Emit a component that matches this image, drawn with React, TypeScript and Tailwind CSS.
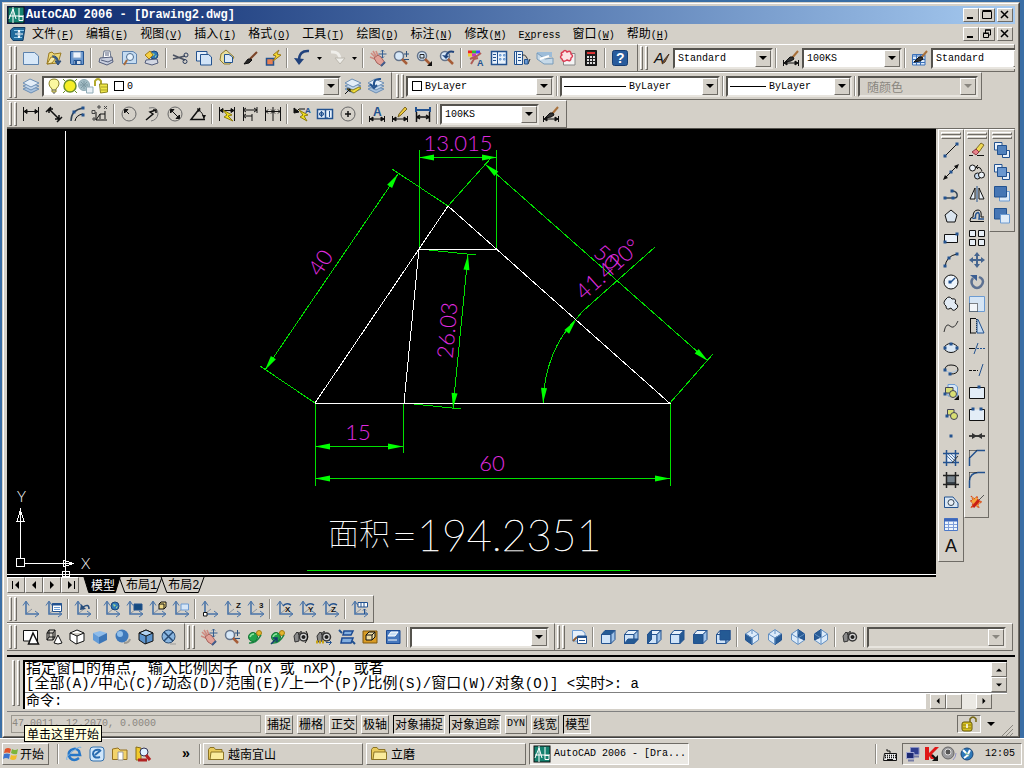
import type { ReactNode } from 'react'

const B = '#23528f'
const L = '#c3dbf5'
const M = '#6c9bd2'

type PathProps = { d: string; s?: string; f?: string; w?: number; dash?: string }

const P = ({ d, s = '#111', f = 'none', w = 1, dash }: PathProps) => (
  <path d={d} stroke={s} fill={f} strokeWidth={w} strokeDasharray={dash} />
)

const Axes = () => (
  <>
    <P d="M3 1V13H15" s="#4873a8" w={1.6} />
    <P d="M0 4.500L3 0L6 4.500M12 10L16 13L12 16" s="#4873a8" />
    <P d="M4 12L9 8" s="#8b939e" />
  </>
)

const Span = ({ y = 13 }: { y?: number }) => (
  <>
    <P d={`M.5 ${y - 3}V${y + 3}M15.500 ${y - 3}V${y + 3}M1 ${y}H15`} />
    <P d={`M1 ${y}L4 ${y - 2}V${y + 2}ZM15 ${y}L12 ${y - 2}V${y + 2}Z`} f="#111" />
  </>
)

const Brush = () => (
  <>
    <P d="M15 1L9 8" s="#a8703a" w={2} />
    <P d="M10 7L7 7L2 12L8 11L11 9Z" f="#333" />
  </>
)

const Lens = () => (
  <>
    <circle cx="6" cy="6" r="4.500" fill="#d7e8f8" stroke="#64748b" strokeWidth="1.500" />
    <P d="M9 9L14 14" s="#a65d38" w={2.5} />
  </>
)

const Globe = ({ x = 10, y = 5, r = 4 }) => (
  <>
    <circle cx={x} cy={y} r={r} fill="#2e78b8" stroke="#1d4778" />
    <P d={`M${x - 2} ${y - 2}L${x + 1} ${y - 1}L${x - 1} ${y + 1}ZM${x + 1} ${y + 1}L${x + 3} ${y}L${x + 1} ${y + 3}Z`} s="none" f="#a8d98a" />
  </>
)

const Hand = () => (
  <>
    <P d="M5 7L1 3M6 6L3 1M8 6L6 1M5 9L0 7" s="#cf8a80" w={1.6} />
    <P d="M4 8L8 5L11 7L15 13L12 16L7 13Z" s="#a5605a" f="#e2a197" />
    <P d="M15 12L11 16" s="#3f5f8f" w={2} />
    <P d="M12.500 0V8M8.500 4H16.500M11 1.500L12.500 0L14 1.500M11 6.500L12.500 8L14 6.500" s="#355f91" />
  </>
)

const Orbit = () => (
  <>
    <circle cx="6" cy="8" r="4.500" fill="#21a34a" stroke="#157334" />
    <P d="M3 8Q4 5 7 5" s="#8ee5a0" w={1.5} />
    <circle cx="12" cy="4" r="2.500" fill="#e4b52c" stroke="#a37d15" />
    <P d="M2 14Q9 15 14 6" s="#168440" w={1.5} />
  </>
)

const Camera = () => (
  <>
    <P d="M1 7L4 3L6 5V12L2 13Z" f="#8a8a8a" s="#333" />
    <circle cx="10.500" cy="8" r="4" fill="#d2d2d2" stroke="#333" strokeWidth="1.500" />
    <circle cx="10.500" cy="8" r="1.500" fill="#222" />
    <P d="M6 3V6M8 2V5" w={1.5} s="#333" />
  </>
)

const Cube = ({ dark }: { dark: string }) => {
  const tone = (k: string, base: string) => (dark === k ? '#245a94' : base)
  return (
    <>
      <P d="M1.500 5.500H11V14.500H1.500Z" s={B} f={tone('front', '#cfe3f8')} />
      <P d="M1.500 5.500L5 1.500H15L11 5.500Z" s={B} f={tone('top', '#e5f0fb')} />
      <P d="M11 5.500L15 1.500V10.500L11 14.500Z" s={B} f={tone('right', '#9fc2e8')} />
      {dark === 'bottom' && <P d="M1.500 14.500L5 10H15L11 14.500Z" s={B} f="#245a94" />}
      {dark === 'left' && <P d="M1.500 5.500L5.500 1.500V10.500L1.500 14.500Z" s={B} f="#245a94" />}
      {dark === 'back' && <P d="M5 1.500H15V11H5Z" s={B} f="#245a94" />}
    </>
  )
}

const Iso = ({ dark }: { dark: string }) => (
  <>
    <P d="M8 .5L14.500 5V11L8 15.500L1.500 11V5Z" s="#6390c2" f="#dcebfa" />
    <P d={dark} s={B} f="#285c96" />
    <P d="M1.500 5L8 9L14.500 5M8 9V15M8 1V5" s="#6390c2" />
  </>
)

const Hatch = ({ f }: { f: string }) => (
  <>
    <P d="M3.500 3.500H12.500V12.500H3.500Z" f={f} s={B} />
    <P d="M0 3.500H16M0 12.500H16M3.500 0V16M12.500 0V16" s={B} w={1.5} />
    <P d="M4 6L10 12M5 4L12 11M8 4L12 8" s="#5a7da7" />
    <P d="M9 13L15 6" s="#333" />
  </>
)

const Letter = ({ c, x = 8, y = 7, size = 9, fill = '#111' }: { c: string; x?: number; y?: number; size?: number; fill?: string }) => (
  <text x={x} y={y} fontSize={size} fontWeight="700" fill={fill} stroke="none" fontFamily="Liberation Sans, sans-serif">{c}</text>
)

const Stack = ({ a, b }: { a: string; b: string }) => (
  <>
    <P d="M.5 .5H8V8H.5Z" s={B} f={a} />
    <P d="M8.500 8.500H15.500V15.500H8.500Z" s={B} f={a} />
    <P d="M3.500 3.500H12.500V12.500H3.500Z" s={B} f={b} />
  </>
)

const Dot = ({ x, y }: { x: number; y: number }) => <rect x={x - 1.5} y={y - 1.5} width="3" height="3" fill={B} stroke="none" />

const Arrowed = ({ children }: { children: ReactNode }) => (
  <>
    {children}
    <P d="M16 11V16H11Z" f="#111" s="none" />
  </>
)

const Layers = () => (
  <>
    <P d="M0 11L7 8L16 11L8 15Z" s="#6d8fb4" f="#a8c2de" />
    <P d="M0 8L7 5L16 8L8 12Z" s="#6d8fb4" f="#c5d8ec" />
    <P d="M0 5L7 1L16 5L8 9Z" s="#6d8fb4" f="#e4eef8" />
  </>
)

const icons: Record<string, ReactNode> = {
  app: (
    <>
      <rect width="16" height="16" fill="#14816f" />
      <P d="M1 12L5 2L8 12M1 9H16M5 0V16M11 1V10M11 9.500H15V13.500H11Z" s="#fff" />
    </>
  ),
  doc: (
    <>
      <P d="M3.500 1.500H15L13 14.500H3L.5 11V4Z" f="#216b9c" s="#123d66" />
      <P d="M4 4.500H14M4 11.500H12" s="#8cc6e8" />
      <P d="M9 4V12M5 8H13M8 6.500L9 4L10 6.500M8 9.500L9 12L10 9.500" s="#fff" />
    </>
  ),
  new: <P d="M.5 2.500H11.500L15.500 6V14.500H.5Z" f="#d8e8f8" s="#5c82ad" />,
  open: (
    <>
      <P d="M1 14L3 3L6 2L8 4L15 3L12 13Z" f="#ecd777" s="#9a7b23" />
      <P d="M1 14L5 7L10 8L6 13Z" f="#f7eba8" s="#9a7b23" />
      <P d="M6 6Q12 5 12 12M9 11L12 15L15 11Z" s="#2d4d77" f="#345b8c" />
    </>
  ),
  save: (
    <>
      <P d="M1.500 1.500H14.500V14.500H2.500L1.500 13.500Z" f="#6b98cf" s={B} />
      <P d="M4 2H12V8H4Z" f="#eef4fb" s="#8aa9ce" />
      <P d="M5 10.500H12V14.500H5Z" f="#d5dfeb" s={B} />
      <P d="M7 11V14" s={B} w={2} />
    </>
  ),
  print: (
    <>
      <P d="M5 8L6 1H12L13 8" f="#fff" s="#68748b" />
      <P d="M2 8L14 7L15 12L9 15L1 12Z" f="#c9cfde" s="#535d7b" />
      <P d="M3 10L10 12L14 10M7 3H11M7 5H11" s="#535d7b" />
    </>
  ),
  preview: (
    <>
      <P d="M1.500 1.500H12L15.500 4V13.500H1.500Z" f="#c5dcf2" s="#6084ae" />
      <circle cx="9" cy="7" r="3.500" fill="#e8f3fc" stroke="#4d6c90" />
      <P d="M6 10L3 15" s="#a86b3a" w={2} />
    </>
  ),
  publish: (
    <>
      <Globe x={10} y={5} />
      <P d="M1 5L6 1L9 5L5 9Z" f="#f5cf43" s="#a47d17" />
      <P d="M2 10L13 9L14 13L8 15L1 13Z" f="#d2d7e3" s="#535d7b" />
    </>
  ),
  cut: (
    <>
      <P d="M0 5L12 10M0 9L12 6" s="#4a5160" w={1.5} />
      <circle cx="13" cy="5" r="2" stroke="#2b3c5c" />
      <circle cx="12" cy="11.500" r="2" stroke="#2b3c5c" />
    </>
  ),
  copy: (
    <>
      <P d="M.5 1.500H11V11H.5Z" f="#e6f0fb" s={B} />
      <P d="M4.500 4.500H12.500L15.500 7V15H4.500Z" f="#d2e4f7" s={B} />
    </>
  ),
  paste: (
    <>
      <P d="M2 4L7 0L15 7L11 14L5 14L1 10Z" f="#e9df9d" s="#8d7a2f" />
      <P d="M5.500 4.500H10L13.500 7V12.500H5.500Z" f="#dbe9f8" s={B} />
    </>
  ),
  brush: (
    <>
      <P d="M15 2L8 9" s="#7b4528" w={2} />
      <P d="M9 9L6 9L2 14L7 13L10 10Z" f="#282828" />
    </>
  ),
  block: (
    <>
      <P d="M1.500 8.500H8.500V15H1.500Z" f="#e88053" s={B} w={1.5} />
      <P d="M14 0L8 5L11 6L8 11L16 5L12 4Z" f="#f8dd30" s="#98781c" />
    </>
  ),
  undo: (
    <>
      <P d="M15 1Q5 0 5 11" s="#21427c" w={2.5} />
      <P d="M0 8L5 15L10 9Z" f="#21427c" s="none" />
    </>
  ),
  redo: (
    <>
      <P d="M2 2Q11 1 11 10" s="#efeeea" w={3} />
      <P d="M6 8L11 14L16 8Z" f="#efeeea" s="#bbb7ae" />
    </>
  ),
  pan: <Hand />,
  zoomrt: (<><Lens /><P d="M13.500 1V7M11 4H16M11 9.500H16" s="#2e527c" /></>),
  zoomwin: (<Arrowed><Lens /><P d="M4 4.500H8V8H4Z" s="#222" /></Arrowed>),
  zoomprev: (<><Lens /><P d="M15 2Q8 0 7 7" s="#1f447c" w={2} /><P d="M3 5L7 9L10 6Z" s="none" f="#1f447c" /></>),
  props: (
    <>
      <P d="M0 2H4" s="#e22" w={3} /><P d="M4 2H8" s="#3b3" w={3} /><P d="M8 2H12" s="#44f" w={3} />
      <P d="M0 5H4" s="#ec3" w={3} /><P d="M4 5H8" s="#c3c" w={3} />
      <P d="M2 9L9 6L13 3M3 14L6 9L10 8" s="#b05d56" w={2} />
      <Letter c="A" x={9} y={16} fill={B} />
    </>
  ),
  center: (
    <>
      <P d="M.5 1.500H15.500V14.500H.5Z" f="#eaf3fc" s={B} w={1.5} />
      <P d="M6.500 2V14M2 4.500H5M2 7.500H5M2 10.500H5" s={B} />
      <P d="M8.500 4.500H10V6H8.500ZM12.500 4.500H14V6H12.500ZM8.500 8.500H10V10H8.500ZM12.500 8.500H14V10H12.500Z" s={M} f={L} />
    </>
  ),
  palette: (
    <>
      <P d="M.5 1.500H8.500V14.500H.5Z" f="#eaf3fc" s={B} />
      <P d="M2.500 2V14M4 4.500H7M4 7.500H7M4 10.500H7" s={B} />
      <P d="M8 5Q13 4 14 12M11 10L14 14L16 9" s="#333" />
      <P d="M10.500 9.500H14V14H10.500Z" f={M} s={B} />
    </>
  ),
  sheet: (
    <>
      <P d="M0 2H15V7H0Z" f="#9dbcd8" s="none" />
      <P d="M0 3L8 9L16 8V14L7 14L0 9Z" f="#c6d9e8" s="#789ab8" />
      <P d="M3 9L12 6" s="#fff" w={2} />
    </>
  ),
  markup: (
    <>
      <P d="M3.500 3.500H15V15H3.500Z" f="#f4f4f4" s="#888" />
      <P d="M3 2Q5-1 7 2Q11 0 11 4Q14 6 11 8Q11 12 7 10Q3 13 2 9Q-1 7 2 5Q0 3 3 2Z" f="#fbe5e5" s="#db3b52" w={1.5} />
    </>
  ),
  calc: (
    <>
      <P d="M2.500 .5H13.500V15.500H2.500Z" f="#1e1e1e" />
      <P d="M4 3H12" s="#d33" w={2} />
      <P d="M4 7H12M4 10H12M4 13H12" s="#ddd" w={2} dash="2 1" />
    </>
  ),
  help: (<><rect x=".5" y=".5" width="15" height="15" rx="2" fill="#285b9c" stroke="#163c70" /><Letter c="?" x={4} y={13} size={14} fill="#fff" /></>),
  tstyle: (<><text x="0" y="13" fontSize="15" fontStyle="italic" fill="#111" stroke="none" fontFamily="Liberation Sans, sans-serif">A</text><P d="M15 4L10 10L8 14L11 12Z" f="#8f5f35" s="#4a3524" /></>),
  dstyle: (<><Brush /><Span y={13} /></>),
  tabstyle: (
    <>
      <P d="M.5 4.500H13V15H.5Z" f="#dcebfb" s="#3b71b9" />
      <P d="M1 6H13M1 9.500H13M1 12.500H13M4.500 5V15M8.500 5V15" s="#3b71b9" />
      <Brush />
    </>
  ),
  layers: <Layers />,
  bulb: (<><P d="M8 1Q3 1 3 6Q3 8 6 11V14H10V11Q13 8 13 6Q13 1 8 1Z" f="#fbf7a0" s="#8b8327" /><P d="M6 12H10M7 15H9" s="#555" /></>),
  sun: (<><circle cx="8" cy="8" r="6" fill="#f6ee26" stroke="#6d8f29" strokeWidth="1.500" /><P d="M1 1L3 3M15 1L13 3M1 15L3 13M15 15L13 13" s="#6d8f29" /></>),
  freeze: (<><circle cx="6" cy="7" r="5.500" fill="#a3bdc5" stroke="#8fabb5" /><P d="M2 7H10M6 3V11M3 4L9 10M9 4L3 10" s="#7d99a3" /><P d="M8.500 9H15V15H8.500Z" f="#e9f1f7" s="#8fabb5" /></>),
  lock: (<><P d="M1 8V3Q4-1 7 3V7" s="#b3aa2c" w={2} /><P d="M5.500 6H13.500V14L6.500 15Z" f="#f0e848" s="#8e871f" /><P d="M7 9H13M7 12H13" s="#a9a128" /></>),
  laymake: (<><Layers /><P d="M2 11L9 15L16 10L14 9L8 12Z" f="#f1df3d" s="#94831e" /><P d="M0 16L5 11M2 11H5V14" /></>),
  layprev: (<><Layers /><P d="M13 1Q5 0 6 8M2 6L6 10L9 7" s={B} w={2} /></>),
  dlin: (<><P d="M.5 1V15M15.500 1V15M1 5.500H15" /><P d="M1 5.500L4 3.500V7.500ZM15 5.500L12 3.500V7.500Z" f="#111" /></>),
  dali: <P d="M0 6L5 1M11 16L16 11M3 3L13 13M3 7V3H7M13 9V13H9" w={1.5} />,
  darc: (<><P d="M2 15Q2 4 14 2" w={1.5} s="#345" /><P d="M6 15Q7 9 14 8" /><Dot x={14} y={2} /><Dot x={5} y={6} /><Dot x={14} y={9} /></>),
  dord: (<><P d="M4 6V14H15M4 14L8 8H13M8 8V13M13 5V13" /><P d="M0 4.500H3V7.500H0ZM1 12H3V14H1ZM6 0H8V2H6ZM12 0L15 3M15 0L12 3" s="#444" /></>),
  drad: (<><circle cx="8" cy="8" r="7" stroke="#666" /><P d="M8 8L4 4M3.500 7V3.500H7Z" f="#111" /></>),
  djog: (<><P d="M5 2Q14 0 14 8Q13 14 7 15" s="#777" /><P d="M2 14L9 8L6 6L12 4M9 4H12V7" w={1.5} /></>),
  ddia: (<><circle cx="8" cy="8" r="7" stroke="#666" /><P d="M4 4L12 12M3.500 7V3.500H7ZM12.500 9V12.500H9Z" f="#111" /></>),
  dang: (<><P d="M10 2L1 13.500H15" w={1.5} /><P d="M8 4Q13 6 14 13" /><P d="M7 2L11 4L8 6ZM12 9L14 13L16 9Z" f="#111" s="none" /></>),
  dquick: (<><P d="M.5 1V15M15.500 1V15M1 4.500H15M1 4.500L4 2.500V6.500ZM15 4.500L12 2.500V6.500Z" f="#111" /><P d="M4 4L13 9L9 10L14 15L5 11L8 9Z" f="#f3e21e" s="#8e7d0d" /></>),
  dbase: <P d="M1.500 1V15M1 4H15M1 10H10M15 1V7M10 8V15M4 2L1 4L4 6M4 8L1 10L4 12M12 2L15 4L12 6" />,
  dcont: <P d="M.5 1V15M8 1V15M15.500 1V15M1 5.500H15M3 3.500L1 5.500L3 7.500M6 3.500L8 5.500L6 7.500M10 3.500L8 5.500L10 7.500M13 3.500L15 5.500L13 7.500" />,
  dlead: (<><P d="M2 6L5 3H11" /><P d="M0 7V2L5 6Z" f="#111" /><Letter c="A" x={11} y={7} size={8} fill={B} /><P d="M5 4L14 9L10 10L13 15L6 11L9 9Z" f="#f3e21e" s="#8e7d0d" /></>),
  dtol: (<><P d="M.5 3.500H15.500V12.500H.5ZM8.500 4V12" f="#e7f1fb" s={B} w={1.5} /><circle cx="4.500" cy="8" r="2" stroke={B} /><P d="M4.500 5V11M2 8H7M10 11V12M12.500 5V11" s={B} /></>),
  dcen: (<><circle cx="8" cy="8" r="7" stroke="#666" /><P d="M8 5V11M5 8H11" w={1.5} /></>),
  dtext: (<><Letter c="A" x={4} y={10} size={12} fill={B} /><Span y={13} /></>),
  dpen: (<><P d="M13 1L7 8L6 11L9 9L15 3Z" f="#ecca3d" s="#7b6520" /><Span y={13} /></>),
  dupd: (<><P d="M1 1V6M15 1V6M1 4H15" s={B} w={2} /><P d="M1.500 6V16M14.500 6V16M2 11H14M5 9L2 11L5 13M11 9L14 11L11 13" w={1.5} /></>),
  ucs: <Axes />,
  ucsd: (<><Axes /><P d="M6.500 2.500H15.500V10.500H6.500Z" f="#fff" s={B} /><P d="M6 3.500H16" s={B} w={2} /><P d="M8 6.500H14M8 8.500H14" s={M} /></>),
  ucsp: (<><Axes /><P d="M14 8Q14 2 8 6" s="#264d7c" w={1.5} /><P d="M5 9L6 3L11 8Z" f="#264d7c" s="none" /></>),
  ucsw: (<><Axes /><Globe x={11} y={5} /></>),
  ucso: (<><Axes /><P d="M7 3H15V9H7Z" f="#164c80" s={B} /></>),
  ucsf: (<><Axes /><P d="M9 3L11 1H16V6L14 8H9Z" f="#efd984" /><P d="M9 3H14V8" /></>),
  ucsv: (<><Axes /><P d="M8 3H15.500V9H8Z" f="#d5e6f7" s={M} /></>),
  ucsor: (<><Axes /><P d="M1.500 11.500H5V15H1.500Z" f="#fff" /></>),
  ucsz: (<><Axes /><Letter c="Z" x={11} y={7} size={8} /></>),
  ucs3: (<><Axes /><Letter c="3" x={11} y={7} size={8} /></>),
  ucsx: (<><Axes /><Letter c="X" x={8} y={11} size={8} /><P d="M6 5Q9 1 14 4" s={B} w={1.5} /></>),
  ucsy: (<><Axes /><Letter c="Y" x={8} y={11} size={8} /><P d="M6 5Q9 1 14 4" s={B} w={1.5} /></>),
  ucszz: (<><Axes /><Letter c="Z" x={8} y={11} size={8} /><P d="M6 5Q9 1 14 4" s={B} w={1.5} /></>),
  ucsa: (<><Axes /><P d="M6 1.500H15.500V6H6ZM9 1V6M12 1V6" f="#fff" s={B} /><P d="M12.500 8V13M11 9.500L12.500 8L14 9.500" s={B} /></>),
  sh2d: (<><P d="M.5 1.500H14.500V12H.5Z" f="#fff" /><P d="M10 4L5.500 15H15.500Z" f="#fff" w={1.5} /></>),
  sh3d: (<><P d="M1 4H7V11H1ZM3 1H9V8H3ZM1 4L3 1M7 4L9 1M7 11L9 8M1 11L3 8" /><P d="M12 6L8 14Q12 16 16 14Z" f="#fff" /></>),
  shhid: (<P d="M8 1L15 4V12L7 15L1 11V4ZM1 4L8 7L15 4M8 7V15" f="#fff" />),
  shflat: (<><P d="M1 4L8 2L15 4L7 8Z" f="#8dbcec" s="none" /><P d="M1 4L7 8V15L1 11Z" f="#629bd8" s="none" /><P d="M7 8L15 4V11L7 15Z" f="#3b75b7" s="none" /></>),
  shgou: (<><circle cx="7" cy="7" r="6.500" fill="#3d78ba" stroke="none" /><circle cx="5" cy="5" r="3" fill="#91c0ec" stroke="none" /><P d="M9 14Q14 14 15 10" s="#9b9993" w={2} /></>),
  shfe: (<><P d="M8 1L15 4V12L7 15L1 11V4Z" f="#5d94cd" /><P d="M1 4L8 7L15 4L8 1Z" f="#b1d1f0" /><P d="M8 7V15" /></>),
  shge: (<><circle cx="7.500" cy="7.500" r="6.500" fill="#8ab6e0" stroke="#274a72" /><P d="M3 3L12 12M12 3L3 12" s="#274a72" w={1.5} /><P d="M9 15H15" s="#999" /></>),
  orbit: <Orbit />,
  corbit: (<><Orbit /><P d="M1 15L7 9M3 9H7V13" s="#173a70" w={1.5} /></>),
  swivel: (<><Camera /><P d="M13 2Q17 8 12 14" /></>),
  dist: (<><Camera /><P d="M0 13H9" s="#c9a413" w={3} dash="2 1" /><P d="M10 13.500H15M13 11L15.500 13.500L13 16" s={B} /></>),
  clip: (<><P d="M5 2H14L12 6H4ZM3 9H14L12 14H2Z" f="#83afe0" s="#1c4a92" w={1.5} /><P d="M0 1L3 4M13 12L16 15" s={B} w={2} /></>),
  clipf: (<><P d="M1 2H15V14H1Z" f="#d99b24" s="#80580e" /><P d="M4 6L7 3H13V8L10 11H4ZM4 6H10V11M10 6L13 3" f="#f3dfa4" /></>),
  clipb: (<><P d="M1.500 1.500H15V14.500H1.500Z" f="#4778bd" s="#1c4a92" /><P d="M3 7L6 3H13L10 7ZM3 11H12" f="#c8def5" s="#fff" /></>),
  named: (<><P d="M1.500 1.500H11L14 4V12H1.500Z" f="#e7f0fa" s={M} /><P d="M2 12L6 8" s="#8d5d34" w={2} /><P d="M6.500 7H15.500V14.500H6.500Z" f="#fff" s={B} /><P d="M6 8H16" s={B} w={2} /><P d="M8 11.500H14" s={B} /></>),
  vtop: <Cube dark="top" />,
  vbottom: <Cube dark="bottom" />,
  vleft: <Cube dark="left" />,
  vright: <Cube dark="right" />,
  vfront: <Cube dark="front" />,
  vback: <Cube dark="back" />,
  isw: <Iso dark="M1.500 5L8 9V15.500L1.500 11Z" />,
  ise: <Iso dark="M8 9L14.500 5V11L8 15.500Z" />,
  ine: <Iso dark="M8 .5L14.500 5V11L8 8Z" />,
  inw: <Iso dark="M8 .5L1.500 5V11L8 8Z" />,
  camera: <Camera />,
  line: (<><P d="M2 14L14 2" /><Dot x={2} y={14} /><Dot x={14} y={2} /></>),
  xline: (<><P d="M1 15L15 1" /><P d="M0 16L2 11L5 14ZM16 0L14 5L11 2Z" f="#111" s="none" /><Dot x={8} y={8} /></>),
  pline: (<><P d="M2 12H11Q15 12 14 8Q13 5 9 5" w={1.5} s="#345" /><Dot x={2} y={12} /><Dot x={10} y={12} /><Dot x={9} y={5} /></>),
  polygon: <P d="M8 2L14 7L12 14H4L2 7Z" f="#dbe5ef" />,
  rect: (<><P d="M1.500 4.500H14.500V12.500H1.500Z" f="#eaf1f9" /><Dot x={2} y={12} /><Dot x={14} y={4} /></>),
  arc: (<><P d="M2 15Q3 4 14 2" /><Dot x={2} y={14} /><Dot x={6} y={6} /><Dot x={14} y={2} /></>),
  circle: (<><circle cx="8" cy="8" r="7" fill="#edf4fb" stroke="#111" /><P d="M8 8L12 4" s={B} w={1.5} /><Dot x={7} y={8} /></>),
  cloud: <P d="M3 3Q6-1 9 3Q14 2 12 7Q17 10 13 13Q10 16 8 12Q3 15 3 10Q-1 7 3 3Z" f="#e2ebf4" />,
  spline: <P d="M1 14Q3 4 7 8T15 3" s="#333" />,
  ellipse: (<><ellipse cx="8" cy="8" rx="6.500" ry="4.500" fill="#dbe8f5" stroke="#111" /><Dot x={2} y={8} /><Dot x={14} y={8} /><Dot x={8} y={4} /></>),
  earc: (<><P d="M2 8Q2 3 8 3Q15 3 15 8Q14 12 8 12" /><P d="M2 8Q8 13 14 8" s="#aac4df" /><Dot x={2} y={8} /><Dot x={7} y={12} /></>),
  insert: (<Arrowed><P d="M5 0.500H12L14.500 3V12H5Z" f="#d6e6f6" s={M} /><P d="M2.500 3.500H10V9H2.500Z" f="#d9df73" s="#445" /><circle cx="10" cy="10" r="3.500" fill="#d9df73" stroke="#445" /><Dot x={2} y={10} /></Arrowed>),
  mblock: (<><P d="M4.500 3.500H11V9H4.500Z" f="#d9df73" s="#445" /><circle cx="11" cy="10" r="3.500" fill="#d9df73" stroke="#445" /><Dot x={4} y={10} /></>),
  point: <Dot x={8} y={8} />,
  hatch: <Hatch f="#e7f1fb" />,
  grad: (<><P d="M3.500 3.500H12.500V12.500H3.500Z" f="#76828b" s="#222" /><P d="M4 10H12V12H4Z" f="#39434b" s="none" /><P d="M0 3.500H16M0 12.500H16M3.500 0V16M12.500 0V16" s="#222" w={1.5} /></>),
  region: (<><P d="M1.500 13.500V3H10L15 9V13.500Z" f="#d8e6f4" s={B} /><circle cx="8" cy="8.500" r="3" fill="#e9eff5" stroke="#345" /></>),
  table: (<><P d="M1.500 2.500H14.500V14.500H1.500Z" f="#eef5fd" s="#4d79c7" /><P d="M1 4H15" s="#3c67bb" w={3} /><P d="M2 8.500H14M2 11.500H14M5.500 5V14M10.500 5V14" s="#7f9fda" /></>),
  mtext: <text x="2" y="14" fontSize="18" fill="#111" stroke="none" fontFamily="Liberation Sans, sans-serif">A</text>,
  erase: (<><P d="M7 7L12 1L15 3L10 10Z" f="#f0d853" s="#7c6c28" /><P d="M3 10L7 7L10 10L7 13Z" f="#e78089" s="#8c3740" /><P d="M0 13.500H4M8 13.500H15" /></>),
  mcopy: (<><circle cx="3.500" cy="4" r="3" fill="#edf3f9" stroke="#111" /><circle cx="8.500" cy="12" r="3" fill="#c6d9ed" stroke="#111" /><circle cx="12.500" cy="11" r="3" fill="#edf3f9" stroke="#111" /><P d="M8 3Q12 3 13 7M9 1L7 3L9 5" /></>),
  mirror: (<><P d="M6 2V13H1ZM10 2V13H15Z" f="#e8eff6" /><P d="M8 0V16" s={B} /></>),
  offset: (<><P d="M1 13.500H15M1 13Q1 9 4 9Q4 2 9 2Q13 2 12 9H15" /><P d="M4 11Q4 10 6.500 10Q6 5 9 4.500Q11 5 10 11H15" s={B} w={1.5} /></>),
  array: <P d="M.5 .5H6.500V6.500H.5ZM9.500 .5H15.500V6.500H9.500ZM.5 9.500H6.500V15.500H.5ZM9.500 9.500H15.500V15.500H9.500Z" f="#e8eff6" />,
  move: (<><P d="M8 2V14M2 8H14" s="#45658f" w={2} /><P d="M8 0L11 4H5ZM8 16L5 12H11ZM0 8L4 5V11ZM16 8L12 5V11Z" f="#45658f" s="none" /></>),
  rotate: (<><P d="M4 4Q1 8 4 12Q8 16 12 12Q16 7 12 4L10 3" s="#5d7191" w={2.5} /><P d="M1 1H8V7Z" f="#3c5f93" s="none" /></>),
  scale: (<><P d="M.5 .5H15.500V15.500H.5Z" f="#d6e5f4" s={M} /><P d="M.5 7.500H8.500V15.500H.5Z" f="#f2f6fa" dash="1 1" /></>),
  stretch: (<><P d="M1.500 .5H7M1.500 15H7M1.500 0V15.500" /><P d="M7.500 1V15" dash="1 1" /><P d="M8 1.500H9L15 15H8Z" f="#c6daef" s={B} /></>),
  trim: (<><P d="M0 8.500H6" /><P d="M8 8.500H16" dash="2 1" s={B} /><P d="M5 14L9 3" s={B} /></>),
  extend: (<><P d="M0 8.500H9" dash="3 1" /><P d="M10 14L14 2" s={B} /></>),
  brk1: (<><P d="M.5 3.500H15.500V14.500H.5Z" f="#e3edf7" /><Dot x={10} y={3} /></>),
  brk2: (<><P d="M4 3.500H.5V14.500H15.500V3.500H12" f="#e3edf7" /><Dot x={4} y={3} /><Dot x={12} y={3} /></>),
  join: (<><P d="M0 8H16" w={1.5} /><P d="M3 5L8 8L3 11ZM13 5L8 8L13 11Z" f="#333" s="none" /></>),
  chamfer: (<><P d="M.5 16V8L8 .5H16" s={B} w={1.5} /><P d="M.5 .5H8M.5 .5V8" dash="1 1" /></>),
  fillet: (<><P d="M.5 16V9Q1 1 9 .5H16" s={B} w={1.5} /><P d="M.5 .5H8M.5 .5V8" dash="1 1" /></>),
  explode: (<><P d="M2 2L6 5L8 2L9 6L13 8L9 10L10 14L6 11L2 14L4 9L1 7L4 6Z" f="#f6a83a" s="#d5481f" dash="2 1" /><P d="M4 13L10 6" s="#c91f17" w={3} /><P d="M10 6L15 1" s="#555" /></>),
  o1: <Stack a="#e9f1fa" b="#5282bd" />,
  o2: <Stack a="#e9f1fa" b="#6b98cf" />,
  o3: (<><P d="M5.500 5.500H15.500V15H5.500Z" f="#dfebf8" s={M} /><P d="M.5 .5H12.500V11H.5Z" f="#4676b4" s={B} /></>),
  o4: (<><P d="M.5 .5H12.500V11H.5Z" f="#4676b4" s={B} /><P d="M6.500 6.500H15.500V15H6.500Z" f="#dfebf8" s={M} /></>),
  win: (
    <>
      <P d="M2 3Q5 1 8 3L7 7Q4 6 1 7Z" f="#e1542c" s="none" />
      <P d="M9 3Q12 5 15 3L14 8Q11 9 8 7Z" f="#7cb53c" s="none" />
      <P d="M1 8Q4 7 7 8L6 13Q3 11 0 13Z" f="#3c74cf" s="none" />
      <P d="M8 9Q11 10 14 9L13 13Q10 15 7 13Z" f="#f2bd2b" s="none" />
    </>
  ),
  ie: (<><P d="M13 12Q8 16 4 12Q1 7 5 4Q10 1 13 5L14 9H4" s="#2677c8" w={2.5} /><P d="M1 14Q-1 11 7 5T15 2" s="#74b1e6" /></>),
  mail: (<><rect x="1" y="1" width="14" height="14" rx="3" fill="#cfe6fa" stroke="#3270ad" /><P d="M11 4Q4 3 4 8Q5 13 11 11M6 9L12 4" s="#286baf" w={2} /></>),
  folder: (<><P d="M.5 13.500V3.500L2 1.500H6L7.500 3.500H14V13.500Z" f="#e9ca5c" s="#8c7425" /><P d="M3 6H15.500V13.500H2Z" f="#fbeb9c" s="#8c7425" /></>),
  folderd: (<><P d="M.5 13.500V3L6 2L8 4H15V13.500Z" f="#f3d36a" s="#95711f" /><P d="M6 6H11V14H6Z" f="#fff" s="#999" /></>),
  find: (<><P d="M1 1L6 2V14H1Z" f="#f1c92c" s="#896f12" /><circle cx="9" cy="6" r="4" fill="#dff0ff" stroke="#335" /><P d="M11 9L15 14" s="#b12323" w={3} /><P d="M3 14H12" s="#b12323" w={3} /></>),
  kbd: (<><P d="M2.500 7.500H14.500V14.500H1.500Z" f="#eee" /><P d="M3 9.500H14M3 11.500H14" dash="1 1" w={1.5} /><P d="M5 13.500H11M8 7V5H5V3" /></>),
  net: (<><P d="M5.500 1.500H14V8.500H5.500Z" f="#2f3e8f" s="#8b92c4" /><P d="M1.500 6.500H9V12.500H1.500Z" f="#1d2a72" s="#a1a7d2" /><P d="M3 14.500H9M9 10.500H14" s="#767ca5" w={2} /></>),
  kav: (<><P d="M2 1H6V7L12 1H16L9 8L12 13H8L6 10V14H2Z" f="#df1717" s="none" /><P d="M9 9L13 13" w={2} /><P d="M15 9V15H9Z" f="#111" s="none" /></>),
  vol: (<><circle cx="7" cy="7" r="6" fill="#9a9a9d" stroke="#666" /><circle cx="7" cy="6" r="3" fill="#555" stroke="#ddd" /><P d="M12 14Q15 11 15 7" s="#9295c6" /></>),
  qq: (<><Globe x={8} y={8} r={6} /><P d="M4 4L7 7M11 4L9 8M5 12L9 9" s="#fff" w={2} /></>),
  unlock: (<><P d="M9 7V3Q12-1 15 3V6" s="#766711" w={1.5} /><rect x="1" y="6" width="10" height="9" rx="2" fill="#d9c322" stroke="#665908" /><P d="M2 9H10M2 12H10" s="#8e7d12" /><P d="M6 8V12" s="#fff" w={1.5} /></>),
}

const Icon = ({ n }: { n: string }) => (
  <svg viewBox="0 0 16 16" fill="none" stroke="#111" className="size-4 shrink-0 overflow-visible" aria-hidden="true">
    {icons[n]}
  </svg>
)

const latin = "font-['Liberation_Mono','Noto_Sans_CJK_SC',monospace] text-[10px]"
const cjk = "font-['Noto_Sans_CJK_SC',sans-serif] text-[12px]"
const raised = 'border border-t-white border-l-white border-r-[#6f6c66] border-b-[#6f6c66]'
const sunken = 'border border-t-[#6f6c66] border-l-[#6f6c66] border-r-white border-b-white'

// Latin and Han runs get their own size so that two Latin cells equal one Han cell
const Mixed = ({ text, a = latin, h = cjk }: { text: string; a?: string; h?: string }) => (
  <>
    {text.split(/([\u4e00-\u9fff]+)/).filter(Boolean).map((run, i) => (
      <span key={i} className={/[\u4e00-\u9fff]/.test(run) ? h : a}>
        {run.split('&').map((part, j) => (j === 0 ? part : <span key={j}><u>{part[0]}</u>{part.slice(1)}</span>))}
      </span>
    ))}
  </>
)

const Sep = () => (
  <div className="flex w-1.5 shrink-0 justify-center">
    <div className="h-5 w-0.5 border-l border-[#8e8b84] bg-white" />
  </div>
)

const Grip = () => (
  <div className="flex h-6 w-3 shrink-0 gap-0.5 pl-0.5">
    <div className={`w-[3px] ${raised}`} />
    <div className={`w-[3px] ${raised}`} />
  </div>
)

const Tri = ({ dir = 'down', fill = '#000' }: { dir?: string; fill?: string }) => (
  <svg viewBox="0 0 8 8" className="size-2 shrink-0" fill={fill} aria-hidden="true">
    {dir === 'down' && <path d="M0 2H8L4 6Z" />}
    {dir === 'up' && <path d="M0 6H8L4 2Z" />}
    {dir === 'left' && <path d="M6 0V8L2 4Z" />}
    {dir === 'right' && <path d="M2 0V8L6 4Z" />}
  </svg>
)

// "|" is a separator, "v" a small drop-down arrow, the rest are icon names
const Tools = ({ items }: { items: string }) => (
  <>
    {items.split(' ').map((n, i) => {
      if (n === '|') return <Sep key={i} />
      if (n === 'v') return <button key={i} type="button" aria-label="menu" className="flex w-3 shrink-0 justify-center"><svg viewBox="0 0 5 3" className="h-[3px] w-[5px]"><path d="M0 0H5L2.500 3Z" /></svg></button>
      return <button key={i} type="button" aria-label={n} className="flex h-[22px] w-[23px] shrink-0 items-center justify-center"><Icon n={n} /></button>
    })}
  </>
)

const Bar = ({ children, className = '' }: { children: ReactNode; className?: string }) => (
  <div className={`flex h-7 shrink-0 items-center ${raised} border-l-0 ${className}`}>
    <Grip />
    {children}
  </div>
)

type ComboProps = { label: string; value: string; className: string; lead?: ReactNode; disabled?: boolean }

const Combo = ({ label, value, className, lead, disabled }: ComboProps) => (
  <div className={`flex h-[21px] shrink-0 items-center border-2 border-t-[#55534e] border-l-[#55534e] border-r-[#e8e5df] border-b-[#e8e5df] ${disabled ? 'bg-[#d4d0c8]' : 'bg-white'} ${className}`}>
    {lead}
    <select
      aria-label={label}
      disabled={disabled}
      className={`h-full min-w-0 flex-1 appearance-none bg-transparent pt-px pl-[3px] outline-none ${/[\u4e00-\u9fff]/.test(value) ? cjk : latin} ${disabled ? 'text-[#8a8780]' : 'text-black'}`}
    >
      <option>{value}</option>
    </select>
    <span className={`flex h-full w-4 shrink-0 items-center justify-center bg-[#d4d0c8] ${raised}`}>
      <Tri fill={disabled ? '#8a8780' : '#000'} />
    </span>
  </div>
)

const menus = ['文件(&F)', '编辑(&E)', '视图(&V)', '插入(&I)', '格式(&O)', '工具(&T)', '绘图(&D)', '标注(&N)', '修改(&M)', 'E&xpress', '窗口(&W)', '帮助(&H)']

const WinButtons = ({ middle }: { middle: 'max' | 'restore' }) => (
  <div className="flex shrink-0 pr-0.5">
    <button type="button" aria-label="minimize" className={`flex h-3.5 w-4 items-center justify-center bg-[#d4d0c8] ${raised}`}>
      <svg viewBox="0 0 10 10" className="size-2.5"><path d="M1 8H7" stroke="#000" strokeWidth="2" /></svg>
    </button>
    <button type="button" aria-label={middle} className={`flex h-3.5 w-4 items-center justify-center bg-[#d4d0c8] ${raised}`}>
      <svg viewBox="0 0 10 10" className="size-2.5" fill="none" stroke="#000">
        {middle === 'max' ? <path d="M.5 1.500H9.500V8.500H.5ZM.5 .5H9.500" /> : <path d="M3.500 4V1H8.500V6H7M3 1H9M1.500 4.500H6.500V8.500H1.500ZM1 4H7" />}
      </svg>
    </button>
    <button type="button" aria-label="close" className={`ml-0.5 flex h-3.5 w-4 items-center justify-center bg-[#d4d0c8] ${raised}`}>
      <svg viewBox="0 0 10 10" className="size-2.5"><path d="M1 1L8 8M8 1L1 8" stroke="#000" strokeWidth="1.500" /></svg>
    </button>
  </div>
)

const Tip = ({ x, y, to }: { x: number; y: number; to: number }) => (
  <path d="M0 0L-15 -3V3Z" fill="#0f0" transform={`translate(${x} ${y}) rotate(${to})`} />
)

const Drawing = () => (
  <svg viewBox="7 129 929 448" preserveAspectRatio="xMinYMin slice" className="absolute inset-0 size-full" fill="none">
    <g stroke="#00e000" shapeRendering="crispEdges">
      <path d="M419.500 150V249M496.500 150V249M420 157.500H496" />
      <path d="M448 206L392 169M315 403L260 366M398 174L265 370" />
      <path d="M448 206L491 158M670 403L713 354M485 164L708 361" />
      <path d="M419 249L476 255M404 403L461 409M468 255L453 408" />
      <path d="M315.500 403V486M403.500 403V453M670.500 403V486M315 446.500H403M315 478.500H670" />
      <path d="M543 403Q545 351 576 319Q583 310 592 303L655 247" />
      <path d="M307 570.500H630" />
    </g>
    <g stroke="#fff" shapeRendering="crispEdges">
      <path d="M315 403.500H670L448 206L315 403M419 249.500H496M419 249L404 403" />
      <path d="M65.500 131V576M7 574.500H937M16.500 558.500H24.500V566.500H16.500ZM20.500 558V511M25 563.500H73" />
      <path d="M17 521L20.500 510L24 521ZM63 560L73 563.500L63 567ZM62.500 571.500H69V576H62.500Z" />
    </g>
    <Tip x={419} y={157.5} to={180} />
    <Tip x={497} y={157.5} to={0} />
    <Tip x={398} y={174} to={-56} />
    <Tip x={265} y={370} to={124} />
    <Tip x={485} y={164} to={221} />
    <Tip x={708} y={361} to={41} />
    <Tip x={468} y={255} to={-84} />
    <Tip x={453} y={408} to={96} />
    <Tip x={315} y={446.5} to={180} />
    <Tip x={403} y={446.5} to={0} />
    <Tip x={315} y={478.5} to={180} />
    <Tip x={670} y={478.5} to={0} />
    <Tip x={576} y={320} to={-52} />
    <Tip x={543} y={403} to={94} />
    <g fill="#e02ce0" textAnchor="middle" className="font-['Lato',sans-serif] text-[22px] font-light">
      <text x="458" y="151">13.015</text>
      <text x="358" y="440">15</text>
      <text x="492" y="471">60</text>
      <text transform="translate(327 267) rotate(-56)">40</text>
      <text transform="translate(455 331) rotate(-85)">26.03</text>
      <text transform="translate(613 275) rotate(-42)">41.410°</text>
      <text transform="translate(602 263) rotate(41)">50</text>
    </g>
    <g fill="#fff" className="font-['Lato','Noto_Sans_CJK_SC',sans-serif] font-thin">
      <text x="328" y="545" className="text-[31px]">面积</text>
      <text x="392" y="551" stroke="#fff" strokeWidth=".5" className="text-[43px]">=194.2351</text>
      <text x="17" y="502" className="text-[15px] font-light">Y</text>
      <text x="81" y="569" className="text-[15px] font-light">X</text>
    </g>
  </svg>
)

const SideBar = ({ items }: { items: string }) => (
  <div className={`flex w-[26px] flex-col items-center pt-0.5 pb-1 ${raised}`}>
    <div className={`h-[3px] w-5 ${raised}`} />
    <div className={`mt-px h-[3px] w-5 ${raised}`} />
    {items.split(' ').map((n) => (
      <button key={n} type="button" aria-label={n} className="flex h-[22px] w-[23px] items-center justify-center"><Icon n={n} /></button>
    ))}
  </div>
)

const Tab = ({ text, active }: { text: string; active?: boolean }) => (
  <button type="button" className={`relative -ml-[3px] flex h-4 items-center pr-1.5 pl-2 leading-4 ${active ? 'z-10 text-white' : 'text-black'}`}>
    <svg viewBox="0 0 40 16" preserveAspectRatio="none" className="absolute inset-0 size-full" aria-hidden="true">
      <path d="M1 0L6 15.500H34L39 0" fill={active ? '#000' : '#d4d0c8'} stroke="#000" vectorEffect="non-scaling-stroke" />
    </svg>
    <span className="relative flex items-baseline leading-4"><Mixed text={text} a="font-['Liberation_Mono',monospace] text-[12px]" /></span>
  </button>
)

const toggles: [string, boolean][] = [
  ['捕捉', false], ['栅格', false], ['正交', false], ['极轴', false], ['对象捕捉', true],
  ['对象追踪', true], ['DYN', false], ['线宽', false], ['模型', true],
]

const cmdLatin = "font-['Liberation_Mono',monospace] text-[14px]"
const cmdHan = "font-['Liberation_Mono','Noto_Sans_CJK_SC',monospace] text-[15px]"

const ScrollButton = ({ dir }: { dir: string }) => (
  <button type="button" aria-label={dir} className={`flex h-[15px] w-4 shrink-0 items-center justify-center bg-[#d4d0c8] ${raised}`}>
    <svg viewBox="-4 -4 16 16" className="size-3">
      {dir === 'up' && <path d="M0 6H8L4 2Z" />}
      {dir === 'down' && <path d="M0 2H8L4 6Z" />}
      {dir === 'left' && <path d="M6 0V8L2 4Z" />}
      {dir === 'right' && <path d="M2 0V8L6 4Z" />}
    </svg>
  </button>
)

const Task = ({ icon, text, active }: { icon: string; text: string; active?: boolean }) => (
  <button type="button" className={`flex h-[22px] w-40 items-center gap-1 overflow-hidden pl-1 whitespace-pre ${active ? `bg-[#ebe9e4] ${sunken}` : raised}`}>
    <Icon n={icon} />
    <span className="flex items-center leading-4"><Mixed text={text} /></span>
  </button>
)

export default function App() {
  return (
    <div className={`flex h-screen min-h-[600px] flex-col overflow-hidden bg-[#3a6ea5] leading-4 text-black ${latin}`}>
      <div className="flex min-h-0 flex-1 pt-0.5 pr-1 pl-0.5">
        <div className="flex min-w-0 flex-1 flex-col border border-t-[#d4d0c8] border-l-[#d4d0c8] border-r-[#404040] border-b-[#404040] bg-[#d4d0c8]">
          <div className={`flex min-h-0 flex-1 flex-col px-[3px] pt-0.5 ${raised}`}>
            <header className="flex h-[18px] shrink-0 items-center gap-0.5 bg-linear-to-r from-[#0a246a] to-[#a6caf0] pl-px">
              <Icon n="app" />
              <h1 className="flex-1 font-['Liberation_Mono',monospace] text-[12px] leading-4 font-bold whitespace-pre text-white">AutoCAD 2006 - [Drawing2.dwg]</h1>
              <WinButtons middle="max" />
            </header>

            <nav className="flex h-5 shrink-0 items-center pl-[3px]">
              <Icon n="doc" />
              <div className="flex flex-1 items-baseline">
                {menus.map((m) => (
                  <button key={m} type="button" className="flex items-baseline px-1.5 leading-4"><Mixed text={m} /></button>
                ))}
              </div>
              <WinButtons middle="restore" />
            </nav>

            <div className="flex shrink-0 overflow-hidden">
              <Bar className="w-[631px]">
                <Tools items="new open save | print preview publish | cut copy paste brush block | undo v redo v | pan zoomrt zoomwin zoomprev | props center palette sheet markup calc | help" />
              </Bar>
              <Bar className="min-w-0 flex-1">
                <Tools items="tstyle" />
                <Combo label="文字样式" value="Standard" className="w-[100px]" />
                <Sep />
                <Tools items="dstyle" />
                <Combo label="标注样式" value="100KS" className="w-[100px]" />
                <Sep />
                <Tools items="tabstyle" />
                <Combo label="表格样式" value="Standard" className="w-[100px]" />
              </Bar>
            </div>

            <div className="flex shrink-0">
              <Bar className="w-[385px]">
                <Tools items="layers" />
                <Combo
                  label="图层"
                  value="0"
                  className="w-[299px]"
                  lead={
                    <div className="flex items-center pl-0.5">
                      <Icon n="bulb" /><Icon n="sun" /><Icon n="freeze" /><Icon n="lock" />
                      <span className="ml-1 size-2.5 border border-black bg-white" />
                    </div>
                  }
                />
                <Tools items="laymake layprev" />
              </Bar>
              <Bar className="w-[590px] pl-0.5">
                <Combo label="颜色" value="ByLayer" className="w-[148px]" lead={<span className="ml-1 size-2.5 shrink-0 border border-black" />} />
                <Sep />
                <Combo label="线型" value="ByLayer" className="w-40" lead={<span className="ml-0.5 h-px w-[62px] shrink-0 bg-black" />} />
                <Sep />
                <Combo label="线宽" value="ByLayer" className="w-[126px]" lead={<span className="ml-0.5 h-px w-9 shrink-0 bg-black" />} />
                <Sep />
                <Combo label="打印样式" value="随颜色" className="w-[120px]" disabled lead={<span className="w-1" />} />
              </Bar>
            </div>

            <div className="flex shrink-0">
              <Bar className="w-[560px]">
                <Tools items="dlin dali darc dord | drad djog ddia dang | dquick dbase dcont | dlead dtol dcen | dtext dpen dupd |" />
                <Combo label="当前标注样式" value="100KS" className="w-[99px]" />
                <Tools items="dstyle" />
              </Bar>
            </div>

            <main className="flex min-h-0 flex-1">
              <section className="relative min-w-0 flex-1 overflow-hidden border-t border-[#55534e] bg-black">
                <Drawing />
              </section>
              <aside className="flex w-[79px] shrink-0 items-start border-t border-[#6f6c66] pl-0.5">
                <SideBar items="line xline pline polygon rect arc circle cloud spline ellipse earc insert mblock point hatch grad region table mtext" />
                <SideBar items="erase mcopy mirror offset array move rotate scale stretch trim extend brk1 brk2 join chamfer fillet explode" />
                <SideBar items="o1 o2 o3 o4" />
              </aside>
            </main>

            <div className="flex h-[18px] shrink-0 pb-0.5">
              {['first', 'left', 'right', 'last'].map((k) => (
                <button key={k} type="button" aria-label={k} className={`flex h-4 w-[18px] items-center justify-center ${raised}`}>
                  {k === 'first' && <span className="h-2 w-px bg-black" />}
                  <Tri dir={k === 'first' || k === 'left' ? 'left' : 'right'} />
                  {k === 'last' && <span className="h-2 w-px bg-black" />}
                </button>
              ))}
              <div className="flex pl-[7px]">
                <Tab text="模型" active />
                <Tab text="布局1" />
                <Tab text="布局2" />
              </div>
            </div>

            <div className="flex shrink-0">
              <Bar className="pr-0.5">
                <Tools items="ucs ucsd | ucsp | ucsw ucso ucsf ucsv | ucsor ucsz ucs3 | ucsx ucsy ucszz | ucsa" />
              </Bar>
            </div>

            <div className="flex shrink-0 overflow-hidden">
              <Bar className="w-[178px]">
                <Tools items="sh2d sh3d shhid shflat shgou shfe shge" />
              </Bar>
              <Bar className="w-[370px]">
                <Tools items="pan zoomrt orbit corbit swivel dist clip clipf clipb |" />
                <Combo label="视口" value="" className="w-[139px]" />
              </Bar>
              <Bar className="w-[458px]">
                <Tools items="named | vtop vbottom vleft vright vfront vback | isw ise ine inw | camera |" />
                <Combo label="视图" value="" className="w-[139px]" disabled />
              </Bar>
            </div>

            <section className="mt-1 flex h-[56px] shrink-0 border-t-2 border-black pt-[3px] pr-2">
              <div className="flex h-[46px] w-4 gap-0.5 pl-[5px]">
                <div className={`w-[3px] ${raised}`} />
                <div className={`w-[3px] ${raised}`} />
              </div>
              <div className="flex h-[49px] min-w-0 flex-1 flex-col border-t-2 border-l-2 border-black bg-white">
                <div className="flex h-[31px] shrink-0 border-b border-[#808080]">
                  <div className="flex-1 pl-px whitespace-pre">
                    <p className="flex h-[15px] items-baseline leading-[15px]"><Mixed text="指定窗口的角点, 输入比例因子 (nX 或 nXP), 或者" a={cmdLatin} h={cmdHan} /></p>
                    <p className="flex h-[15px] items-baseline leading-[15px]"><Mixed text="[全部(A)/中心(C)/动态(D)/范围(E)/上一个(P)/比例(S)/窗口(W)/对象(O)] <实时>: a" a={cmdLatin} h={cmdHan} /></p>
                  </div>
                  <div className="flex flex-col"><ScrollButton dir="up" /><ScrollButton dir="down" /></div>
                </div>
                <div className="flex h-4 items-center">
                  <label htmlFor="cmd" className="flex items-baseline pl-px leading-4"><Mixed text="命令:" a={cmdLatin} h="font-['Liberation_Mono','Noto_Sans_CJK_SC',monospace] text-[14px]" /></label>
                  <input id="cmd" className="h-4 min-w-0 flex-1 bg-transparent pl-1 font-['Liberation_Mono',monospace] text-[14px] outline-none" />
                  <div className="flex w-[81px] bg-[#d4d0c8] pl-1">
                    <ScrollButton dir="left" />
                    <span className={`h-[15px] w-4 ${raised}`} />
                    <span className="w-3.5 bg-[#ebe9e4]" />
                    <ScrollButton dir="right" />
                  </div>
                </div>
              </div>
            </section>

            <footer className="flex h-[25px] shrink-0 items-center gap-1 border-t border-[#808080] pr-0.5 pl-1">
              <div className="flex h-[18px] w-[250px] items-center border border-[#9a978f] text-[#8a8780]">47.0011, 12.2070, 0.0000</div>
              {toggles.map(([t, on]) => (
                <button key={t} type="button" aria-pressed={on} className={`flex h-[19px] items-center px-px leading-4 ${on ? 'border border-t-black border-l-black border-r-white border-b-white' : raised}`}>
                  <Mixed text={t} />
                </button>
              ))}
              <div className="flex-1" />
              <div className={`flex h-[18px] w-6 items-center justify-center ${sunken}`}><Icon n="unlock" /></div>
              <button type="button" aria-label="tray" className="flex w-3 justify-center"><Tri /></button>
              <svg viewBox="0 0 12 12" className="size-3 self-end" stroke="#8a8780"><path d="M1 12L12 1M5 12L12 5M9 12L12 9" /></svg>
            </footer>
          </div>
        </div>
      </div>

      <div className="relative flex h-[30px] shrink-0 items-center border-t border-white bg-[#d4d0c8] px-0.5">
        <div className={`absolute -top-3.5 left-6 z-20 flex h-[17px] items-center border border-black bg-[#ffffe1] px-0.5 leading-4 ${cjk}`}>单击这里开始</div>
        <button type="button" className={`flex h-[22px] w-[47px] items-center gap-px ${raised} ${cjk}`}><Icon n="win" /><span className="whitespace-nowrap">开始</span></button>
        <div className="ml-1.5 flex items-center"><Sep /></div>
        <div className="flex items-center pl-px"><Tools items="ie mail folderd find" /></div>
        <button type="button" className="ml-6 w-4 text-[14px] font-bold">»</button>
        <div className="ml-[3px] flex items-center"><Sep /></div>
        <div className="flex gap-[3px]">
          <Task icon="folder" text="越南宜山" />
          <Task icon="folder" text="立磨" />
          <Task icon="app" text="AutoCAD 2006 - [Dra..." active />
        </div>
        <div className="flex-1" />
        <Sep />
        <div className="flex w-[23px] justify-center"><Icon n="kbd" /></div>
        <div className={`flex h-[22px] items-center gap-0.5 px-0.5 ${sunken}`}>
          <Icon n="net" /><Icon n="kav" /><Icon n="vol" /><Icon n="qq" />
          <span className="px-1 pl-2">12:05</span>
        </div>
      </div>
    </div>
  )
}
